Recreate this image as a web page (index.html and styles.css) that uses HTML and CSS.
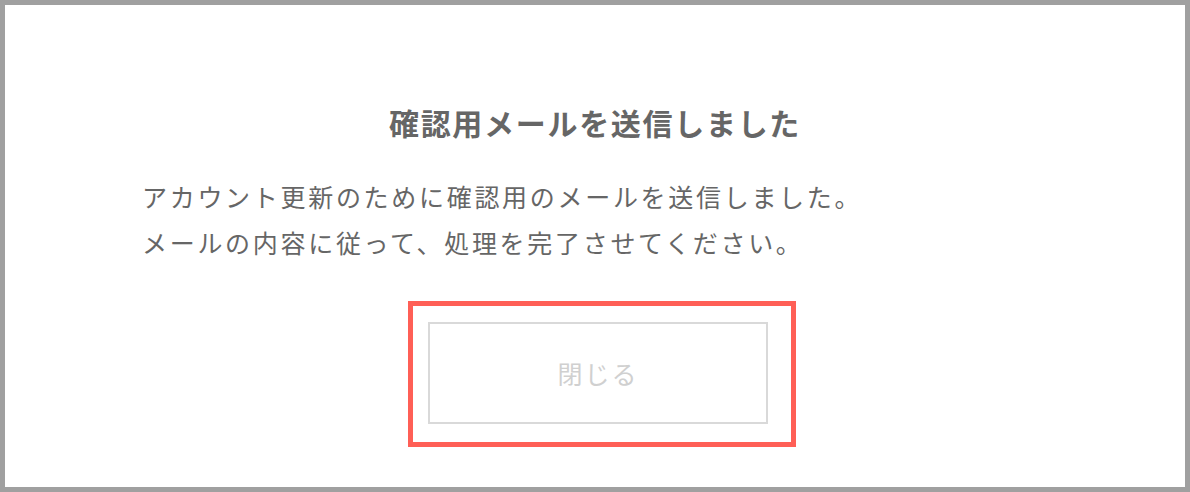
FILE: index.html
```html
<!DOCTYPE html>
<html lang="ja">
<head>
<meta charset="UTF-8">
<meta name="viewport" content="width=device-width, initial-scale=1.0">
<title>確認用メールを送信しました</title>
<link rel="stylesheet" href="styles.css">
</head>
<body>
  <div class="frame">
    <div class="dialog">
      <h2 class="dialog-title">確認用メールを送信しました</h2>
      <p class="dialog-text">アカウント更新のために確認用のメールを送信しました。<br>メールの内容に従って、処理を完了させてください。</p>
      <div class="highlight">
        <button class="close-btn" type="button">閉じる</button>
      </div>
    </div>
  </div>
</body>
</html>
```

FILE: styles.css
```css
html, body {
  margin: 0;
  padding: 0;
}
body {
  font-family: "Noto Sans CJK JP", "Noto Sans", sans-serif;
  background-color: #fff;
}
.frame {
  width: 1190px;
  height: 492px;
  box-sizing: border-box;
  border: 5px solid #a0a0a0;
  background-color: #fff;
}
.dialog {
  padding: 92px 0 0 137px;
}
.dialog-title {
  margin: 0 0 0 -137px;
  text-align: center;
  font-size: 30px;
  font-weight: bold;
  letter-spacing: 1.7px;
  line-height: 50px;
  color: #666;
}
.dialog-text {
  margin: 26px 0 0;
  font-size: 25px;
  letter-spacing: 2.7px;
  line-height: 46px;
  color: #666;
}
.highlight {
  width: 340px;
  margin: 36px 0 0 266px;
  padding: 16px 23px 18px 15px;
  border: 5px solid #ff5f56;
}
.close-btn {
  display: block;
  width: 100%;
  height: 102px;
  box-sizing: border-box;
  border: 2px solid #d9d9d9;
  background-color: #fff;
  font-family: inherit;
  font-size: 25px;
  letter-spacing: 2px;
  color: #d0d0d0;
  cursor: pointer;
}
```
